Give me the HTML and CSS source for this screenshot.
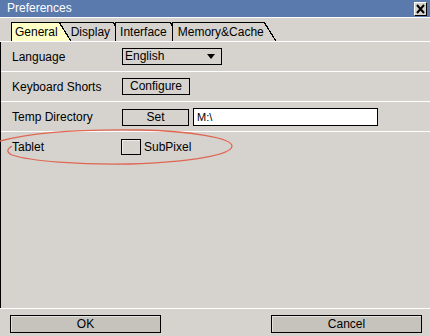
FILE: index.html
```html
<!DOCTYPE html>
<html lang="en">
<head>
    <meta charset="UTF-8">
    <meta name="viewport" content="width=device-width, initial-scale=1.0">
    <title>Preferences</title>
    <link rel="stylesheet" href="styles.css">
</head>
<body>
    <div class="window">
        <div class="titlebar">
            <span class="title">Preferences</span>
            <span class="close">
                <svg width="11" height="12" viewBox="0 0 11 12"><path d="M2 2 L9 10 M9 2 L2 10" stroke="#000" stroke-width="2"/></svg>
            </span>
        </div>
        <div class="tabs">
            <span class="tab active" id="tab0">General</span>
            <span class="tab" id="tab1">Display</span>
            <span class="tab" id="tab2">Interface</span>
            <span class="tab" id="tab3">Memory&amp;Cache</span>
        </div>
        <div class="panel">
            <div class="row">
                <span class="label">Language</span>
                <span class="combo">English<span class="arrow"></span></span>
            </div>
            <div class="row">
                <span class="label">Keyboard Shorts</span>
                <span class="btn configure">Configure</span>
            </div>
            <div class="row">
                <span class="label">Temp Directory</span>
                <span class="btn set">Set</span>
                <span class="field">M:\</span>
            </div>
            <div class="row">
                <span class="label">Tablet</span>
                <span class="check"></span>
                <span class="check-text">SubPixel</span>
            </div>
        </div>
        <div class="footer">
            <span class="btn big">OK</span>
            <span class="btn big">Cancel</span>
        </div>
        <!-- red mark round the tablet row -->
        <svg class="mark" width="240" height="55" viewBox="0 120 240 55">
            <path d="M0,141 C30,133 80,129 140,130 C190,131 232,138 232,146 C232,155 190,162 130,164 C80,165 30,161 12,155 C6,152 7,149 12,146" fill="none" stroke="#df6652" stroke-width="1.3"/>
        </svg>
    </div>
</body>
</html>
```

FILE: styles.css
```css
body{margin:0; font-family:"Liberation Sans", Arial, sans-serif; font-size:12px; color:#000;}

.window{position:relative; width:430px; height:336px; background:#d6d3ce; overflow:hidden;}

.titlebar{display:flex; justify-content:space-between; height:17px; line-height:17px; background:#5a7aae; border-bottom:1px solid #fff; padding-left:7px;}
.title{color:#fff;}
.close{display:flex; align-items:center; justify-content:center; box-sizing:border-box; width:13px; height:14px; margin:2px 3px 0 0; background:#d6d3ce; border:1px solid; border-color:#fff #000 #000 #fff;}

.tabs{display:flex; align-items:flex-end; height:23px; padding-left:11px; border-bottom:1px solid #fff;}
.tab{position:relative; height:18px; line-height:18px; border-top:1px solid #000; border-left:1px solid #000; background:#d6d3ce; --fill:#d6d3ce; white-space:nowrap;}
.tab::after{content:""; position:absolute; top:-1px; left:100%; width:12px; height:19px; background:linear-gradient(to top right, var(--fill) calc(50% - 0.7px), #000 calc(50% - 0.7px), #000 calc(50% + 0.6px), transparent calc(50% + 0.6px));}
.tab.active{background:#ffffc6; --fill:#ffffc6;}
#tab0{padding:0 1px 0 3px; z-index:4;}
#tab1{padding:0 3px 0 11px; z-index:1;}
#tab2{margin-left:2px; padding:0 3px 0 4px; z-index:2;}
#tab3{margin-left:2px; padding:0 0 0 5px; z-index:3;}

.panel{height:266px; border-left:1px solid #000;}
.row{display:flex; align-items:center; height:29px; padding-left:11px;}
.row + .row{border-top:1px solid #fff;}
.label{width:110px;}

.combo{position:relative; box-sizing:border-box; width:100px; height:17px; line-height:15px; padding-left:2px; border:1px solid #000;}
.arrow{position:absolute; right:6px; top:5px; width:0; height:0; border-left:4.5px solid transparent; border-right:4.5px solid transparent; border-top:5px solid #000;}

.btn{box-sizing:border-box; height:17px; line-height:15px; text-align:center; border:1px solid #000;}
.configure{width:68px;}
.set{width:67px; margin-top:1px;}
.field{box-sizing:border-box; width:185px; height:18px; line-height:16px; margin-left:4px; margin-top:1px; padding-left:3px; background:#fff; border:1px solid #000; font-size:11px;}

.check{box-sizing:border-box; width:20px; height:16px; margin-left:-1px; border:1px solid #000; box-shadow:inset 1px 1px #eeece8;}
.check-text{margin-left:3px;}

.footer{display:flex; justify-content:space-between; border-top:1px solid #fff; padding:6px 8px 0 10px;}
.big{width:151px; height:18px; line-height:16px; background:#c6c3bc; box-shadow:inset 1px 1px #e4e2de;}

.mark{position:absolute; left:0; top:120px;}
```
